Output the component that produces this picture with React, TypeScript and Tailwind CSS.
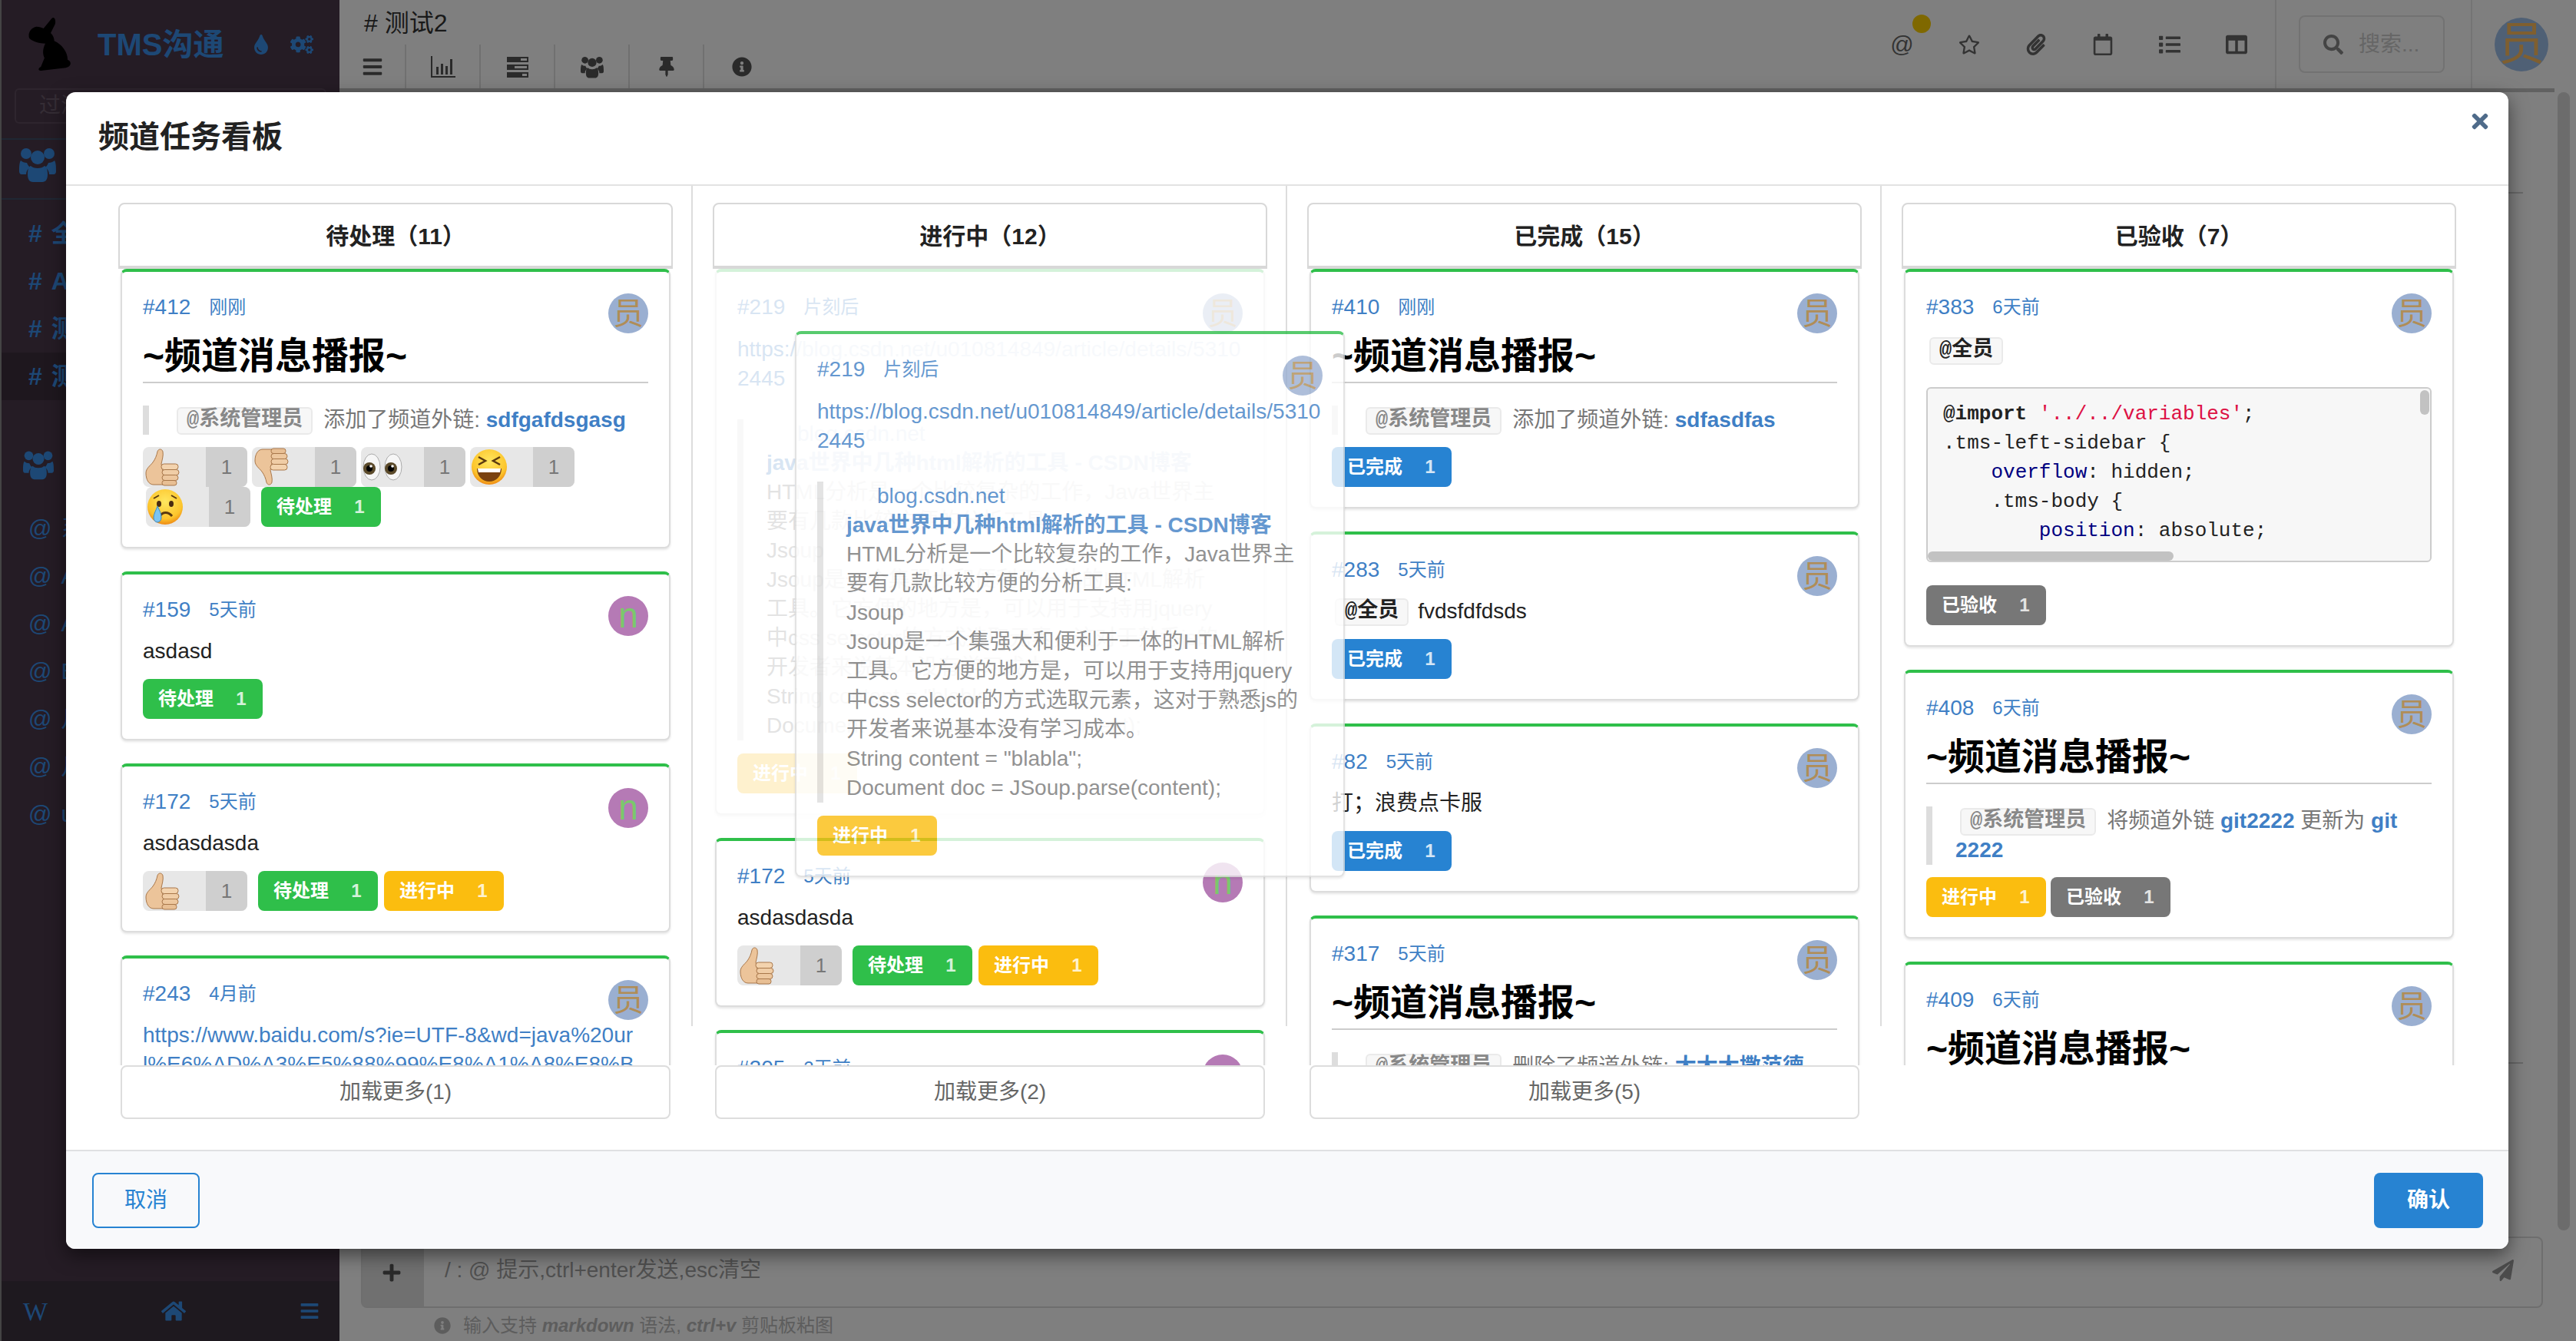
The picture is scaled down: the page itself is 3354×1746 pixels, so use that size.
import React from 'react';
import {
  FaBars, FaCogs, FaColumns, FaHome, FaInfoCircle, FaList, FaPaperPlane, FaPaperclip, FaPlus,
  FaRegCalendar, FaRegStar, FaSearch, FaThumbtack, FaTimes, FaTint,
} from 'react-icons/fa';

const Rabbit = () => (
  <svg viewBox="0 0 60 62" className="w-[72px] h-[72px] fill-black">
    <path d="M31 2c3-3 5 1 4 6l-5 10c3 3 4 6 4 9 9 4 15 13 15 21 5 2 4 8-2 9l-26 3c-5 1-6-2-2-4l4-10c-3-6-1-12 1-16-6 0-14-2-18-6-2-6 2-12 8-13 3 0 6 1 8 2z" />
  </svg>
);

const UsersIcon = ({ className }: { className: string }) => (
  <svg viewBox="0 0 48 46" className={className}>
    <circle cx="9" cy="9" r="7" />
    <circle cx="39" cy="9" r="7" />
    <circle cx="24" cy="14" r="9" />
    <path d="M2 18c2 2 5 3 8 3 1 3 3 5 4 6-3 2-5 5-5 9H3c-2 0-3-2-3-4 0-5 0-11 2-14zM46 18c-2 2-5 3-8 3-1 3-3 5-4 6 3 2 5 5 5 9h6c2 0 3-2 3-4 0-5 0-11-2-14z" />
    <path d="M15 25c2 2 5 3 9 3s7-1 9-3c3 1 4 6 4 11 0 6-2 10-7 10H18c-5 0-7-4-7-10 0-5 1-10 4-11z" />
  </svg>
);

const ChartIcon = () => (
  <svg viewBox="0 0 32 28" className="w-8 h-7 fill-[#555]">
    <path d="M0 0h2v26h30v2H0zM7 14h3v10H7zM13 10h3v14h-3zM19 13h3v11h-3zM25 4h3v20h-3z" />
  </svg>
);

const TasksIcon = () => (
  <svg viewBox="0 0 28 28" className="w-7 h-7 fill-[#555]">
    <path d="M0 1h28v7H0zM0 11h28v7H0zM0 21h28v7H0z" />
    <path d="M18 3h8v3h-8zM10 13h16v3H10zM20 23h6v3h-6z" fill="#fff" />
  </svg>
);

const ThumbShape = () => (
  <>
    <path
      d="M2 33c0-6 5-9 9-14 3-4 5-9 6-14 1-4 6-4 7 0 1 5-1 11-2 16l6 27H12C6 48 2 42 2 33z"
      fill="#ecc49a"
      stroke="#a8774a"
      strokeWidth="1"
    />
    <rect x="22" y="21" width="22" height="7.5" rx="3.5" fill="#f3d3ae" stroke="#a8774a" />
    <rect x="23" y="28.5" width="22" height="7" rx="3.5" fill="#f0cda6" stroke="#a8774a" />
    <rect x="23" y="35.5" width="21" height="7" rx="3.5" fill="#edc79e" stroke="#a8774a" />
    <rect x="23" y="42.5" width="19" height="6.5" rx="3" fill="#e8bf94" stroke="#a8774a" />
  </>
);

const ThumbUp = () => (
  <svg viewBox="0 0 46 50" className="w-[46px] h-[50px]">
    <ThumbShape />
  </svg>
);

const ThumbDown = () => (
  <svg viewBox="0 0 46 50" className="w-[46px] h-[50px] -scale-y-100">
    <ThumbShape />
  </svg>
);

const Eyes = () => (
  <svg viewBox="0 0 52 50" className="w-[52px] h-[50px]">
    <ellipse cx="12" cy="25" rx="11" ry="17" fill="#f6f6f6" stroke="#aaa" />
    <ellipse cx="40" cy="25" rx="11" ry="17" fill="#f6f6f6" stroke="#aaa" />
    <circle cx="9" cy="27" r="8" fill="#5b4a2a" />
    <circle cx="37" cy="27" r="8" fill="#5b4a2a" />
    <circle cx="9" cy="27" r="4" fill="#000" />
    <circle cx="37" cy="27" r="4" fill="#000" />
    <circle cx="11" cy="24" r="1.8" fill="#fff" />
    <circle cx="39" cy="24" r="1.8" fill="#fff" />
  </svg>
);

const FaceBase = () => (
  <>
    <defs>
      <radialGradient id="faceFill" cx="50%" cy="35%" r="65%">
        <stop offset="0%" stopColor="#ffe760" />
        <stop offset="75%" stopColor="#fcc52c" />
        <stop offset="100%" stopColor="#ee8a14" />
      </radialGradient>
    </defs>
    <circle cx="23" cy="25" r="23" fill="url(#faceFill)" />
  </>
);

const Laugh = () => (
  <svg viewBox="0 0 46 50" className="w-[46px] h-[50px]">
    <FaceBase />
    <path d="M9 12l9 5-9 5M37 12l-9 5 9 5" stroke="#5a3a10" strokeWidth="2.5" fill="none" />
    <path d="M7 27h32c0 10-7 17-16 17S7 37 7 27z" fill="#7a4210" />
    <path d="M8 27h30l-1 5H9z" fill="#fff" />
  </svg>
);

const Cry = () => (
  <svg viewBox="0 0 46 50" className="w-[46px] h-[50px]">
    <FaceBase />
    <path d="M8 14l7-4M38 14l-7-4" stroke="#5a3a10" strokeWidth="2" fill="none" />
    <ellipse cx="15" cy="21" rx="3" ry="4" fill="#4a2a10" />
    <ellipse cx="31" cy="21" rx="3" ry="4" fill="#4a2a10" />
    <path d="M16 37c4-6 11-6 16 0" stroke="#5a3a10" strokeWidth="3" fill="none" />
    <path d="M13 24c3 6 5 10 5 15a5 6 0 0 1-10 0c0-5 3-9 5-15z" fill="#7cc4f0" stroke="#3a8ac8" />
  </svg>
);

const Reaction = ({ children }: { children: React.ReactNode }) => (
  <span className="flex h-[52px] w-[136px] rounded-[8px] overflow-hidden bg-[#e7e7e7]">
    <span className="flex items-center w-[82px] pl-[2px]">{children}</span>
    <span className="flex items-center justify-center w-[54px] bg-[#cfcfcf] text-[26px] text-[#777]">1</span>
  </span>
);

const Badge = ({ label, color }: { label: string; color: string }) => (
  <span className={`flex items-center h-[52px] w-[156px] pl-[20px] rounded-[8px] text-white font-bold text-[24px] ${color}`}>
    <span className="w-[80px]">{label}</span>
    <span className="flex-1 text-center text-white/80">1</span>
  </span>
);

const Avatar = ({ purple }: { purple?: boolean }) => (
  <span
    className={`absolute top-[28px] right-[27px] flex items-center justify-center w-[52px] h-[52px] rounded-full leading-none ${
      purple ? 'bg-[#b57ab5] text-[#7bc86c] text-[46px] pb-[2px]' : 'bg-[#9aafd1] text-[#b08d57] text-[40px]'
    }`}
  >
    {purple ? 'n' : '员'}
  </span>
);

const Tag = ({ text, dark }: { text: string; dark?: boolean }) => (
  <code
    className={`inline-block align-top translate-y-[2px] h-[36px] leading-[30px] px-[11px] rounded-[6px] border-2 border-[#eaeaea] bg-[#f7f7f7] font-['Liberation_Mono','Noto_Sans_CJK_SC',monospace] font-bold text-[27px] ${
      dark ? 'text-[#222]' : 'text-[#888]'
    }`}
  >
    {text}
  </code>
);

const Title = () => (
  <div className="mt-[13px] h-[66px] leading-[62px] border-b-2 border-[#ccc] text-[48px] font-bold text-black whitespace-nowrap">
    ~频道消息播报~
  </div>
);

const Quote = ({ children }: { children: React.ReactNode }) => (
  <blockquote className="mt-[29px] border-l-8 border-[#ddd] pl-[30px] text-[28px] leading-[38px] text-[#777]">
    {children}
  </blockquote>
);

const LinkText = ({ children }: { children: React.ReactNode }) => (
  <a className="font-bold text-[#3f7fc5]">{children}</a>
);

const Card = ({
  id,
  time,
  purple,
  children,
  className = '',
}: {
  id: string;
  time: string;
  purple?: boolean;
  children: React.ReactNode;
  className?: string;
}) => (
  <div
    className={`relative mx-[3px] shrink-0 px-[27px] pt-[26px] pb-[26px] bg-white rounded-[8px] border-2 border-t-4 border-[#ddd] border-t-[#2fbf4a] shadow-[0_2px_3px_rgba(0,0,0,0.1)] ${className}`}
  >
    <div className="flex items-center gap-[24px] h-10 text-[#3f7fc5]">
      <span className="text-[28px]">#{id}</span>
      <span className="text-[24px]">{time}</span>
    </div>
    <Avatar purple={purple} />
    {children}
  </div>
);

const Body = ({ children }: { children: React.ReactNode }) => (
  <div className="mt-[15px] text-[28px] leading-[38px] text-[#222]">{children}</div>
);

const Badges = ({ children, className = 'mt-[17px]' }: { children: React.ReactNode; className?: string }) => (
  <div className={`flex items-center gap-[6px] ${className}`}>{children}</div>
);

const green = 'bg-[#2fbf4a]';
const yellow = 'bg-[#fbbd0f]';
const blue = 'bg-[#2783d2]';
const gray = 'bg-[#777777]';

const Card219 = ({ className }: { className?: string }) => (
  <Card id="219" time="片刻后" className={className}>
    <div className="mt-[16px] text-[28px] leading-[38px] text-[#3f7fc5] break-all">
      https://blog.csdn.net/u010814849/article/details/53102445
    </div>
    <blockquote className="mt-[34px] border-l-8 border-[#ddd] pl-[30px] text-[28px] leading-[38px] text-[#777] whitespace-nowrap">
      <div className="pl-[40px] text-[#3f7fc5]">blog.csdn.net</div>
      <div className="font-bold text-[#3f7fc5]">java世界中几种html解析的工具 - CSDN博客</div>
      <div>HTML分析是一个比较复杂的工作，Java世界主</div>
      <div>要有几款比较方便的分析工具:</div>
      <div>Jsoup</div>
      <div>Jsoup是一个集强大和便利于一体的HTML解析</div>
      <div>工具。它方便的地方是，可以用于支持用jquery</div>
      <div>中css selector的方式选取元素，这对于熟悉js的</div>
      <div>开发者来说基本没有学习成本。</div>
      <div>String content = "blabla";</div>
      <div>Document doc = JSoup.parse(content);</div>
    </blockquote>
    <Badges className="mt-[17px]">
      <Badge label="进行中" color={yellow} />
    </Badges>
  </Card>
);

const Column = ({
  title,
  more,
  last,
  children,
}: {
  title: string;
  more?: string;
  last?: boolean;
  children: React.ReactNode;
}) => (
  <div className={`h-[1094px] pl-[26px] ${last ? 'pr-[26px]' : 'pr-[24px] border-r-2 border-[#ddd]'}`}>
    <div className="pt-[22px]">
      <div className="flex items-center justify-center h-[86px] pt-[2px] border-2 border-b-4 border-[#d8d8d8] rounded-t-[8px] text-[30px] font-bold text-[#222]">
        {title}
      </div>
      <div className="flex flex-col gap-[30px] h-[1037px] overflow-hidden">{children}</div>
      {more && (
        <div className="flex items-center justify-center mx-[3px] h-[70px] bg-white border-2 border-[#ddd] rounded-[8px] text-[28px] text-[#666]">
          {more}
        </div>
      )}
    </div>
  </div>
);

const TodoDoingBadges = () => (
  <Badges>
    <Reaction><ThumbUp /></Reaction>
    <span className="ml-[8px] mr-[2px]"><Badge label="待处理" color={green} /></span>
    <Badge label="进行中" color={yellow} />
  </Badges>
);

const Board = () => (
  <div className="flex-1 grid grid-cols-4 px-[42px] overflow-hidden">
    <Column title="待处理（11）" more="加载更多(1)">
      <Card id="412" time="刚刚">
        <Title />
        <Quote>
          <span className="ml-[6px]"><Tag text="@系统管理员" /></span><span className="ml-[14px]">添加了频道外链: </span>
          <LinkText>sdfgafdsgasg</LinkText>
        </Quote>
        <div className="mt-[16px]">
          <div className="flex gap-[6px]">
            <Reaction><ThumbUp /></Reaction>
            <Reaction><ThumbDown /></Reaction>
            <Reaction><Eyes /></Reaction>
            <Reaction><Laugh /></Reaction>
          </div>
          <div className="flex items-center pl-[4px] gap-[14px]">
            <Reaction><Cry /></Reaction>
            <Badge label="待处理" color={green} />
          </div>
        </div>
      </Card>
      <Card id="159" time="5天前" purple>
        <Body>asdasd</Body>
        <Badges><Badge label="待处理" color={green} /></Badges>
      </Card>
      <Card id="172" time="5天前" purple>
        <Body>asdasdasda</Body>
        <TodoDoingBadges />
      </Card>
      <Card id="243" time="4月前">
        <div className="mt-[15px] text-[28px] leading-[38px] text-[#3f7fc5] break-all">
          https://www.baidu.com/s?ie=UTF-8&amp;wd=java%20url%E6%AD%A3%E5%88%99%E8%A1%A8%E8%BE%BE%E5%BC%8F
        </div>
      </Card>
    </Column>

    <Column title="进行中（12）" more="加载更多(2)">
      <Card219 className="opacity-20" />
      <Card id="172" time="5天前" purple>
        <Body>asdasdasda</Body>
        <TodoDoingBadges />
      </Card>
      <Card id="205" time="2天前" purple>
        <Body>asdasd</Body>
      </Card>
    </Column>

    <Column title="已完成（15）" more="加载更多(5)">
      <Card id="410" time="刚刚">
        <Title />
        <Quote>
          <span className="ml-[6px]"><Tag text="@系统管理员" /></span><span className="ml-[14px]">添加了频道外链: </span>
          <LinkText>sdfasdfas</LinkText>
        </Quote>
        <Badges className="mt-[16px]"><Badge label="已完成" color={blue} /></Badges>
      </Card>
      <Card id="283" time="5天前">
        <Body>
          <span className="ml-[4px]"><Tag text="@全员" dark /></span>
          <span className="ml-[12px]">fvdsfdfdsds</span>
        </Body>
        <Badges><Badge label="已完成" color={blue} /></Badges>
      </Card>
      <Card id="82" time="5天前">
        <Body>打；浪费点卡服</Body>
        <Badges><Badge label="已完成" color={blue} /></Badges>
      </Card>
      <Card id="317" time="5天前">
        <Title />
        <Quote>
          <span className="ml-[6px]"><Tag text="@系统管理员" /></span><span className="ml-[14px]">删除了频道外链: </span>
          <LinkText>大大大撒范德</LinkText>
        </Quote>
      </Card>
    </Column>

    <Column title="已验收（7）" last>
      <Card id="383" time="6天前">
        <div className="mt-[17px] pl-[4px] h-[36px]"><Tag text="@全员" dark /></div>
        <pre className="relative mt-[31px] h-[228px] pt-[14px] pl-[20px] bg-[#f7f7f7] border-2 border-[#ccc] rounded-[6px] overflow-hidden font-['Liberation_Mono',monospace] text-[26px] leading-[38px] text-[#222]">
          <div><b>@import</b> <span className="text-[#dd1144]">'../../variables'</span>;</div>
          <div>.tms-left-sidebar {'{'}</div>
          <div>    <span className="text-[#000080]">overflow</span>: hidden;</div>
          <div>    .tms-body {'{'}</div>
          <div>        <span className="text-[#000080]">position</span>: absolute;</div>
          <span className="absolute top-[2px] right-[1px] w-[12px] h-[32px] rounded-full bg-[#c2c2c2]" />
          <span className="absolute bottom-0 left-0 w-[320px] h-[12px] rounded-full bg-[#c2c2c2]" />
        </pre>
        <Badges className="mt-[30px]"><Badge label="已验收" color={gray} /></Badges>
      </Card>
      <Card id="408" time="6天前">
        <Title />
        <Quote>
          <span className="ml-[6px]"><Tag text="@系统管理员" /></span><span className="ml-[14px]">将频道外链 </span>
          <LinkText>git2222</LinkText> 更新为 <LinkText>git 2222</LinkText>
        </Quote>
        <Badges className="mt-[16px]">
          <Badge label="进行中" color={yellow} />
          <Badge label="已验收" color={gray} />
        </Badges>
      </Card>
      <Card id="409" time="6天前">
        <Title />
      </Card>
    </Column>
  </div>
);

const Modal = () => (
  <div className="absolute left-[86px] top-[120px] flex flex-col w-[3180px] h-[1506px] bg-white rounded-[12px] shadow-[0_8px_24px_rgba(0,0,0,0.5)] overflow-hidden">
    <div className="flex items-center justify-between shrink-0 h-[122px] pl-[42px] pr-[22px] border-b-2 border-[#e2e2e2]">
      <h2 className="pb-[4px] text-[40px] font-bold text-[#222]">频道任务看板</h2>
      <FaTimes className="mb-[44px] text-[30px] text-[#4f6b8a]" />
    </div>
    <Board />
    <div className="flex items-center justify-between shrink-0 h-[129px] pl-[34px] pr-[33px] bg-[#f8f9fb] border-t-2 border-[#dfe0e2]">
      <button className="w-[140px] h-[72px] rounded-[8px] border-2 border-[#2783d2] text-[28px] text-[#2783d2]">取消</button>
      <button className="w-[142px] h-[72px] rounded-[8px] bg-[#2783d2] text-[28px] font-bold text-white">确认</button>
    </div>
    <Card219 className="!absolute !mx-0 left-[949px] top-[311px] w-[716px] opacity-80" />
  </div>
);

const channels = ['全员群', 'Angular', '测试', '测试2'];
const members = ['系统管理员', 'Admin', 'Alice', 'Bob', '月月', '月半', 'user'];

const Sidebar = () => (
  <aside className="flex flex-col shrink-0 w-[442px] h-full bg-[#4a384a] border-l-2 border-[#888] text-[#3a90ea]">
    <div className="flex items-center h-[115px] pl-[28px]">
      <Rabbit />
      <span className="ml-[25px] text-[40px] font-bold whitespace-nowrap">TMS沟通</span>
      <FaTint className="ml-[36px] text-[26px]" />
      <FaCogs className="ml-[25px] text-[30px]" />
    </div>
    <div className="mx-[17px] h-[46px] px-[30px] border-2 border-[#5c4a5c] rounded-[6px] text-[28px] leading-[42px] text-[#6a5a6a]">过滤</div>
    <div className="mt-[19px] flex items-center h-[80px] pb-[12px] pl-[22px] border-y-2 border-[#3e4e66]">
      <UsersIcon className="w-[50px] h-[46px] fill-[#3a90ea]" />
    </div>
    <div className="pt-[13px]">
      {channels.map((name, i) => (
        <div key={name} className={`flex items-center h-[62px] pl-[35px] text-[32px] font-bold ${i === 3 ? 'bg-[#3c2e3c]' : ''}`}>
          <span className="mr-[12px]">#</span>{name}
        </div>
      ))}
    </div>
    <div className="flex items-center h-[62px] mt-[53px] pl-[28px]">
      <UsersIcon className="w-[40px] h-[42px] fill-[#3a90ea]" />
    </div>
    <div className="pt-[20px]">
      {members.map((name) => (
        <div key={name} className="flex items-center h-[62px] pl-[35px] text-[30px]">
          <span className="mr-[12px]">@</span>{name}
        </div>
      ))}
    </div>
    <div className="flex-1" />
    <div className="flex items-center justify-between h-[78px] pl-[28px] pr-[26px] bg-[#3c323e] text-[#3a90ea]">
      <span className="font-['Liberation_Serif',serif] text-[34px]">W</span>
      <FaHome className="text-[32px]" />
      <FaBars className="text-[26px]" />
    </div>
  </aside>
);

const toolbarIcons = [
  <FaBars key="bars" className="text-[28px] text-[#555]" />,
  <ChartIcon key="chart" />,
  <TasksIcon key="tasks" />,
  <UsersIcon key="users" className="w-[30px] h-[30px] fill-[#555]" />,
  <FaThumbtack key="pin" className="text-[26px] text-[#555]" />,
  <FaInfoCircle key="info" className="text-[26px] text-[#555]" />,
];

const rightIcons = [
  <span key="at" className="text-[30px] leading-none">@</span>,
  <FaRegStar key="star" />,
  <FaPaperclip key="clip" />,
  <FaRegCalendar key="cal" />,
  <FaList key="list" />,
  <FaColumns key="cols" />,
];

const Header = () => (
  <header className="flex shrink-0 h-[115px] bg-white">
    <div className="flex-1 min-w-0">
      <div className="h-[58px] pl-[32px] text-[32px] leading-[60px] text-[#333]"># 测试2</div>
      <div className="flex h-[57px]">
        {toolbarIcons.map((icon, i) => (
          <div
            key={i}
            className={`flex items-center justify-center ${i === 0 ? 'w-[87px]' : 'w-[97px]'} ${i < 5 ? 'border-r-2 border-[#e0e0e0]' : ''}`}
          >
            {icon}
          </div>
        ))}
      </div>
    </div>
    <div className="flex items-center pr-[36px]">
      {rightIcons.map((icon, i) => (
        <div key={i} className="relative flex items-center justify-center w-[87px] text-[28px] text-[#666]">
          {icon}
          {i === 0 && <span className="absolute -top-[24px] right-[6px] w-[24px] h-[24px] rounded-full bg-[#ffd000]" />}
        </div>
      ))}
      <div className="self-stretch ml-[7px] border-l-2 border-[#e8e8e8]" />
      <div className="flex items-center w-[190px] h-[75px] ml-[29px] mr-[34px] pl-[30px] border-2 border-[#e4e4e4] rounded-[8px] text-[28px] text-[#ccc]">
        <FaSearch className="mr-[20px] text-[26px] text-[#888]" />
        搜索...
      </div>
      <div className="self-stretch border-l-2 border-[#e8e8e8]" />
      <div className="flex items-center justify-center w-[70px] h-[70px] ml-[29px] rounded-full bg-[#9fc0ea] text-[60px] leading-none text-[#ffbe60]">员</div>
    </div>
  </header>
);

const Main = () => (
  <main className="flex flex-col flex-1 min-w-0 h-full bg-white">
    <Header />
    <div className="shrink-0 h-[5px] mr-[28px] bg-[#c2c2c2]" />
    <div className="flex flex-1 min-h-0">
      <div className="flex-1 pr-[45px]">
        <div className="mt-[130px] h-[2px] bg-[#d0d0d0]" />
        <div className="mt-[1131px] h-[2px] bg-[#d0d0d0]" />
      </div>
      <div className="w-[16px] mr-[8px] h-[1482px] rounded-full bg-[#d8d8d8]" />
    </div>
    <div className="flex shrink-0 w-[2841px] h-[93px] ml-[28px] border-2 border-[#ddd] rounded-[8px] text-[28px] text-[#a0a0a0]">
      <span className="flex items-center justify-center w-[80px] pr-[4px] bg-[#e0e0e0]">
        <FaPlus className="text-[26px] text-[#555]" />
      </span>
      <span className="flex-1 pl-[27px] pt-[21px]">/ : @ 提示,ctrl+enter发送,esc清空</span>
      <span className="pt-[28px] pr-[36px]"><FaPaperPlane className="text-[28px] text-[#999]" /></span>
    </div>
    <div className="flex items-center shrink-0 h-[43px] pl-[123px] pt-[2px] text-[24px] text-[#bbb]">
      <FaInfoCircle className="mr-[16px] text-[22px]" />
      输入支持&nbsp;<b><i>markdown</i></b>&nbsp;语法,&nbsp;<b><i>ctrl+v</i></b>&nbsp;剪贴板粘图
    </div>
  </main>
);

const App = () => (
  <div className="relative flex w-[3354px] h-[1746px] overflow-hidden font-['Liberation_Sans','Noto_Sans_CJK_SC',sans-serif]">
    <Sidebar />
    <Main />
    <div className="absolute inset-0 bg-black/50" />
    <Modal />
  </div>
);

export default App;
